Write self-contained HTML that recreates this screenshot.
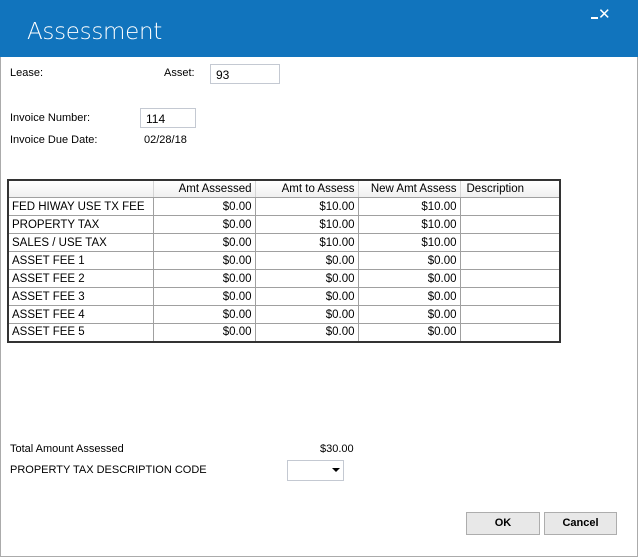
<!DOCTYPE html>
<html><head><meta charset="utf-8"><style>
*{margin:0;padding:0;box-sizing:border-box}
body{width:638px;height:557px;background:#fff;position:relative;overflow:hidden;font-family:"Liberation Sans",sans-serif;font-size:11px;color:#000}
.a{position:absolute;white-space:nowrap}
#title{left:0;top:0;width:638px;height:57px;background:#1174bd}
#win{left:0;top:57px;width:638px;height:500px;border:1px solid #ababab;border-top:none}
.in{position:absolute;background:#fff;border:1px solid #c4c9d2;padding:3px 0 0 5px;font-size:12px}
table{position:absolute;left:7px;top:179px;width:554px;border-collapse:collapse;border:2px solid #333}
td,th{border:1px solid #a0a0a0;height:18px;font-weight:normal;font-size:11.5px;padding:0 3px;line-height:16px}
th{background:linear-gradient(#fff,#f0f0f0);text-align:right;border-color:#d5d5d5;height:17px;border-bottom:1px solid #a0a0a0}
td.r{text-align:right}
.btn{position:absolute;top:512px;height:23px;background:#e8e8e8;border:1px solid #adadad;font-weight:bold;font-size:11px;text-align:center;line-height:21px}
</style></head><body>
<div class="a" id="title"></div>
<div class="a" style="left:27px;top:19px;font-size:23px;color:#fff;font-family:'DejaVu Sans',sans-serif;font-weight:200;letter-spacing:-0.3px">Assessment</div>
<div class="a" style="left:591px;top:17px;width:7px;height:2px;background:#fff"></div>
<div class="a" style="left:598px;top:5px;color:#fff;font-size:15px">✕</div>
<div class="a" id="win"></div>
<div class="a" style="left:10px;top:67px">Lease:</div>
<div class="a" style="left:164px;top:67px">Asset:</div>
<div class="in" style="left:210px;top:64px;width:70px;height:20px">93</div>
<div class="a" style="left:10px;top:112px">Invoice Number:</div>
<div class="in" style="left:140px;top:108px;width:56px;height:20px">114</div>
<div class="a" style="left:10px;top:134px">Invoice Due Date:</div>
<div class="a" style="left:144px;top:134px">02/28/18</div>
<table>
<tr><th style="width:145px"></th><th style="width:102px">Amt Assessed</th><th style="width:103px">Amt to Assess</th><th style="width:102px">New Amt Assess</th><th style="text-align:left;padding-left:6px">Description</th></tr>
<tr><td>FED HIWAY USE TX FEE</td><td class="r">$0.00</td><td class="r">$10.00</td><td class="r">$10.00</td><td></td></tr>
<tr><td>PROPERTY TAX</td><td class="r">$0.00</td><td class="r">$10.00</td><td class="r">$10.00</td><td></td></tr>
<tr><td>SALES / USE TAX</td><td class="r">$0.00</td><td class="r">$10.00</td><td class="r">$10.00</td><td></td></tr>
<tr><td>ASSET FEE 1</td><td class="r">$0.00</td><td class="r">$0.00</td><td class="r">$0.00</td><td></td></tr>
<tr><td>ASSET FEE 2</td><td class="r">$0.00</td><td class="r">$0.00</td><td class="r">$0.00</td><td></td></tr>
<tr><td>ASSET FEE 3</td><td class="r">$0.00</td><td class="r">$0.00</td><td class="r">$0.00</td><td></td></tr>
<tr><td>ASSET FEE 4</td><td class="r">$0.00</td><td class="r">$0.00</td><td class="r">$0.00</td><td></td></tr>
<tr><td>ASSET FEE 5</td><td class="r">$0.00</td><td class="r">$0.00</td><td class="r">$0.00</td><td></td></tr>
</table>
<div class="a" style="left:10px;top:443px">Total Amount Assessed</div>
<div class="a" style="left:320px;top:443px">$30.00</div>
<div class="a" style="left:10px;top:464px">PROPERTY TAX  DESCRIPTION CODE</div>
<div class="in" style="left:287px;top:460px;width:57px;height:21px"></div>
<div class="a" style="left:332px;top:468px;width:0;height:0;border-left:4px solid transparent;border-right:4px solid transparent;border-top:4px solid #000"></div>
<div class="btn" style="left:466px;width:74px">OK</div>
<div class="btn" style="left:544px;width:73px">Cancel</div>
</body></html>
